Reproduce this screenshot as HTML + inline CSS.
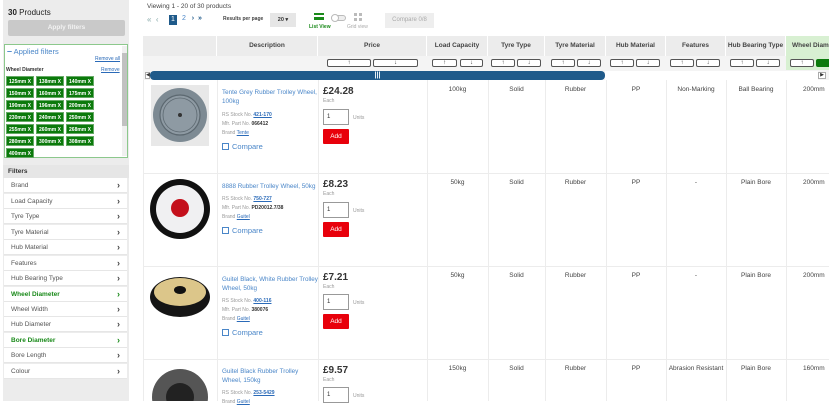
<!DOCTYPE html>
<html><head><meta charset="utf-8"><style>
*{box-sizing:border-box;margin:0;padding:0}
body{width:829px;height:401px;overflow:hidden;background:#fff;font-family:"Liberation Sans",Arial,sans-serif;color:#333;position:relative}
.a{position:absolute}
.side{left:3px;top:0;width:126px;height:401px;background:#ececec}
.tag{position:absolute;height:10px;background:#0b7a0b;color:#fff;font-size:5px;font-weight:bold;line-height:10px;text-align:center;width:28px;border:1px solid #6a6}
.fi{position:absolute;left:4px;width:123px;height:15px;background:#fff;border-bottom:1px solid #e6e6e6;font-size:6.5px;line-height:15px;padding-left:7px;color:#555}
.fi:after{content:"›";position:absolute;right:7px;font-size:9px;font-weight:bold;color:#444}
.fi.g{color:#1a8a1a;font-weight:bold}
.fi.g:after{color:#1a8a1a}
.hd{position:absolute;top:36px;height:20px;background:#ececec;font-size:6.5px;font-weight:bold;line-height:20px;text-align:center;color:#444;border-right:1px solid #fff}
.sr{position:absolute;top:56px;height:14px;background:#f4f4f4}
.sb{position:absolute;top:59px;width:27px;height:8px;border:1px solid #555;border-radius:2px;background:#fff;font-size:6px;line-height:6px;text-align:center;font-weight:bold}
.vl{position:absolute;top:80px;height:321px;width:1px;background:#ececec}
.hl{position:absolute;left:143px;width:686px;height:1px;background:#ececec}
.c{position:absolute;font-size:6.5px;text-align:center;color:#444}
.ds{position:absolute;left:222px;width:96px;font-size:6.3px;color:#4a86c8;line-height:9px}
.m{font-size:5px;color:#999;line-height:9px}
.m b{color:#333}.m u{color:#2a6ab8;font-weight:bold}
.cmp{font-size:7.5px;color:#4a86c8;margin-top:4px}
.cmp i{display:inline-block;width:7px;height:7px;border:1px solid #4a86c8;margin-right:3px;vertical-align:-1px}
.pr{position:absolute;left:323px;font-size:10px;font-weight:bold;color:#333}
.pr span{display:block;font-size:5px;font-weight:normal;color:#999;margin-top:1px}
.in{position:absolute;left:323px;width:26px;height:16px;border:1px solid #999;font-size:6px;line-height:14px;padding-left:3px}
.un{position:absolute;left:353px;font-size:5px;color:#999}
.add{position:absolute;left:323px;width:26px;height:15px;background:#e8000b;color:#fff;font-size:6.5px;line-height:15px;text-align:center;border-radius:1px}
</style></head><body>
<div class="a side"></div>
<div class="a" style="left:8px;top:8px;font-size:8px;color:#222"><b>30</b> Products</div>
<div class="a" style="left:8px;top:20px;width:117px;height:16px;background:#c9c9c9;border-radius:2px;color:#f2f2f2;font-size:6.5px;font-weight:bold;text-align:center;line-height:16px">Apply filters</div>
<div class="a" style="left:4px;top:44px;width:124px;height:114px;background:#fff;border:1px solid #8cc88c"></div>
<div class="a" style="left:122px;top:46px;width:5px;height:110px;background:#f0f0f0"></div>
<div class="a" style="left:122px;top:53px;width:5px;height:73px;background:#c1c1c1"></div>
<div class="a" style="left:7px;top:46px;font-size:7.5px;color:#4a86c8"><b style="font-size:9px">–</b> Applied filters</div>
<div class="a" style="left:95px;top:56px;font-size:5px;color:#2a6ab8;text-decoration:underline">Remove all</div>
<div class="a" style="left:6px;top:67px;font-size:5px;font-weight:bold;color:#333">Wheel Diameter</div>
<div class="a" style="left:101px;top:67px;font-size:5px;color:#2a6ab8;text-decoration:underline">Remove</div>
<div class="tag" style="left:6px;top:76px">125mm X</div><div class="tag" style="left:36px;top:76px">138mm X</div><div class="tag" style="left:66px;top:76px">140mm X</div>
<div class="tag" style="left:6px;top:88px">150mm X</div><div class="tag" style="left:36px;top:88px">160mm X</div><div class="tag" style="left:66px;top:88px">175mm X</div>
<div class="tag" style="left:6px;top:100px">190mm X</div><div class="tag" style="left:36px;top:100px">196mm X</div><div class="tag" style="left:66px;top:100px">200mm X</div>
<div class="tag" style="left:6px;top:112px">230mm X</div><div class="tag" style="left:36px;top:112px">240mm X</div><div class="tag" style="left:66px;top:112px">250mm X</div>
<div class="tag" style="left:6px;top:124px">255mm X</div><div class="tag" style="left:36px;top:124px">260mm X</div><div class="tag" style="left:66px;top:124px">268mm X</div>
<div class="tag" style="left:6px;top:136px">280mm X</div><div class="tag" style="left:36px;top:136px">300mm X</div><div class="tag" style="left:66px;top:136px">308mm X</div>
<div class="tag" style="left:6px;top:148px">400mm X</div>
<div class="a" style="left:3px;top:165px;width:126px;height:13px;background:#e6e6e6;font-size:6.5px;font-weight:bold;line-height:13px;padding-left:5px;color:#333">Filters</div>
<div class="fi" style="top:178px">Brand</div>
<div class="fi" style="top:194px">Load Capacity</div>
<div class="fi" style="top:209px">Tyre Type</div>
<div class="fi" style="top:225px">Tyre Material</div>
<div class="fi" style="top:240px">Hub Material</div>
<div class="fi" style="top:256px">Features</div>
<div class="fi" style="top:271px">Hub Bearing Type</div>
<div class="fi g" style="top:287px">Wheel Diameter</div>
<div class="fi" style="top:302px">Wheel Width</div>
<div class="fi" style="top:317px">Hub Diameter</div>
<div class="fi g" style="top:333px">Bore Diameter</div>
<div class="fi" style="top:348px">Bore Length</div>
<div class="fi" style="top:364px">Colour</div>

<div class="a" style="left:147px;top:3px;font-size:6.5px;color:#444">Viewing 1 - 20 of 30 products</div>
<div class="a" style="left:147px;top:15px;font-size:8px;color:#8aa;letter-spacing:0">«&nbsp;&nbsp;‹</div>
<div class="a" style="left:169px;top:15px;width:8px;height:10px;background:#1f5a8a;color:#fff;font-size:7px;text-align:center;line-height:10px">1</div>
<div class="a" style="left:182px;top:15px;font-size:7px;color:#4a86c8">2&nbsp;&nbsp;&nbsp;<b style="color:#1f5a8a">›&nbsp;&nbsp;»</b></div>
<div class="a" style="left:223px;top:16px;font-size:5px;font-weight:bold;color:#444">Results per page</div>
<div class="a" style="left:270px;top:13px;width:26px;height:14px;background:#e6e6e6;font-size:5.5px;line-height:14px;text-align:center;font-weight:bold">20 ▾</div>
<div class="a" style="left:314px;top:13px;width:10px;height:7px;border-top:2px solid #1a8a1a;border-bottom:2px solid #1a8a1a"><div style="margin-top:1.5px;height:1.5px;background:#1a8a1a"></div></div>
<div class="a" style="left:309px;top:24px;font-size:5px;color:#1a8a1a;font-weight:bold">List View</div>
<div class="a" style="left:331px;top:15px;width:15px;height:6px;border:1px solid #bbb;border-radius:4px;background:#eee"></div>
<div class="a" style="left:331px;top:14px;width:8px;height:8px;border-radius:4px;background:#fff;border:1px solid #bbb"></div>
<div class="a" style="left:354px;top:13px;width:8px;height:8px;border:3px dotted #bbb"></div>
<div class="a" style="left:347px;top:24px;font-size:5px;color:#aaa">Grid view</div>
<div class="a" style="left:385px;top:13px;width:49px;height:15px;background:#eee;font-size:6px;color:#aaa;line-height:15px;text-align:center">Compare 0/8</div>

<div class="hd" style="left:143px;width:74px"></div>
<div class="hd" style="left:217px;width:101px">Description</div>
<div class="hd" style="left:318px;width:109px">Price</div>
<div class="hd" style="left:427px;width:61px">Load Capacity</div>
<div class="hd" style="left:488px;width:57px">Tyre Type</div>
<div class="hd" style="left:545px;width:61px">Tyre Material</div>
<div class="hd" style="left:606px;width:60px">Hub Material</div>
<div class="hd" style="left:666px;width:60px">Features</div>
<div class="hd" style="left:726px;width:60px">Hub Bearing Type</div>
<div class="hd" style="left:786px;width:50px;background:#d8f0d2;text-align:left;padding-left:6px">Wheel Diam</div>
<div class="sr" style="left:143px;width:643px"></div>
<div class="sr" style="left:786px;width:43px;background:#d8f0d2"></div>
<div class="sb" style="left:327px;width:44px">↑</div><div class="sb" style="left:373px;width:45px">↓</div>
<div class="sb" style="left:432px;width:25px">↑</div><div class="sb" style="left:460px;width:23px">↓</div>
<div class="sb" style="left:491px;width:24px">↑</div><div class="sb" style="left:517px;width:24px">↓</div>
<div class="sb" style="left:551px;width:24px">↑</div><div class="sb" style="left:577px;width:24px">↓</div>
<div class="sb" style="left:610px;width:24px">↑</div><div class="sb" style="left:636px;width:24px">↓</div>
<div class="sb" style="left:670px;width:24px">↑</div><div class="sb" style="left:696px;width:24px">↓</div>
<div class="sb" style="left:730px;width:24px">↑</div><div class="sb" style="left:756px;width:24px">↓</div>
<div class="sb" style="left:790px;width:24px">↑</div><div class="sb" style="left:816px;width:20px;background:#0b7a0b;border-color:#0b7a0b"></div>
<div class="a" style="left:143px;top:70px;width:686px;height:10px;background:#f4f4f4"></div>
<div class="a" style="left:145px;top:72px;width:5px;height:7px;background:#fff;border:1px solid #aaa;font-size:5px;line-height:5px">◀</div>
<div class="a" style="left:150px;top:71px;width:455px;height:9px;background:#1f5a8a;border-radius:4px;color:#fff;font-size:7px;line-height:9px;text-align:center;font-weight:bold">|||</div>
<div class="a" style="left:605px;top:71px;width:213px;height:9px;background:#fff"></div>
<div class="a" style="left:818px;top:72px;width:8px;height:7px;background:#fff;border:1px solid #aaa;font-size:5px;line-height:5px;text-align:center">▶</div>

<div class="vl" style="left:143px"></div><div class="vl" style="left:217px"></div><div class="vl" style="left:318px"></div><div class="vl" style="left:427px"></div><div class="vl" style="left:488px"></div><div class="vl" style="left:545px"></div><div class="vl" style="left:606px"></div><div class="vl" style="left:666px"></div><div class="vl" style="left:726px"></div><div class="vl" style="left:786px"></div>
<div class="hl" style="top:173px"></div><div class="hl" style="top:266px"></div><div class="hl" style="top:359px"></div>

<!-- row 1 -->
<div class="a" style="left:151px;top:85px;width:58px;height:61px;background:#e8e8e8"></div>
<svg class="a" style="left:151px;top:85px" width="58" height="61"><circle cx="29" cy="30" r="27" fill="#7d8a93"/><circle cx="29" cy="30" r="20" fill="#8e9aa3" stroke="#5c6870" stroke-width="1.2"/><circle cx="29" cy="30" r="17" fill="none" stroke="#5c6870" stroke-width="0.8"/><circle cx="29" cy="30" r="2" fill="#333"/></svg>
<div class="ds" style="top:88px">Tente Grey Rubber Trolley Wheel, 100kg<div class="m" style="margin-top:5px">RS Stock No. <u>421-170</u><br>Mfr. Part No. <b>066412</b><br>Brand <u style="font-weight:normal">Tente</u></div><div class="cmp"><i></i>Compare</div></div>
<div class="pr" style="top:86px">£24.28<span>Each</span></div>
<div class="in" style="top:109px">1</div><div class="un" style="top:115px">Units</div>
<div class="add" style="top:129px">Add</div>
<div class="c" style="left:427px;width:61px;top:86px">100kg</div><div class="c" style="left:488px;width:57px;top:86px">Solid</div><div class="c" style="left:545px;width:61px;top:86px">Rubber</div><div class="c" style="left:606px;width:60px;top:86px">PP</div><div class="c" style="left:666px;width:60px;top:86px">Non-Marking</div><div class="c" style="left:726px;width:60px;top:86px">Ball Bearing</div><div class="c" style="left:803px;top:86px">200mm</div>

<!-- row 2 -->
<svg class="a" style="left:148px;top:177px" width="64" height="64"><circle cx="32" cy="32" r="30" fill="#111"/><circle cx="32" cy="32" r="24" fill="#f0f0f2"/><circle cx="32" cy="31" r="9" fill="#c4101c"/></svg>
<div class="ds" style="top:182px">8888 Rubber Trolley Wheel, 50kg<div class="m" style="margin-top:4px">RS Stock No. <u>750-727</u><br>Mfr. Part No. <b>PD20012.7/38</b><br>Brand <u style="font-weight:normal">Guitel</u></div><div class="cmp"><i></i>Compare</div></div>
<div class="pr" style="top:179px">£8.23<span>Each</span></div>
<div class="in" style="top:202px">1</div><div class="un" style="top:208px">Units</div>
<div class="add" style="top:222px">Add</div>
<div class="c" style="left:427px;width:61px;top:179px">50kg</div><div class="c" style="left:488px;width:57px;top:179px">Solid</div><div class="c" style="left:545px;width:61px;top:179px">Rubber</div><div class="c" style="left:606px;width:60px;top:179px">PP</div><div class="c" style="left:666px;width:60px;top:179px">-</div><div class="c" style="left:726px;width:60px;top:179px">Plain Bore</div><div class="c" style="left:803px;top:179px">200mm</div>

<!-- row 3 -->
<svg class="a" style="left:148px;top:270px" width="64" height="50"><ellipse cx="32" cy="27" rx="30" ry="20" fill="#151515"/><ellipse cx="32" cy="22" rx="26" ry="14" fill="#dcc68a"/><ellipse cx="32" cy="20" rx="6" ry="4" fill="#111"/></svg>
<div class="ds" style="top:275px">Guitel Black, White Rubber Trolley Wheel, 50kg<div class="m" style="margin-top:4px">RS Stock No. <u>400-116</u><br>Mfr. Part No. <b>380076</b><br>Brand <u style="font-weight:normal">Guitel</u></div><div class="cmp"><i></i>Compare</div></div>
<div class="pr" style="top:272px">£7.21<span>Each</span></div>
<div class="in" style="top:294px">1</div><div class="un" style="top:300px">Units</div>
<div class="add" style="top:314px">Add</div>
<div class="c" style="left:427px;width:61px;top:272px">50kg</div><div class="c" style="left:488px;width:57px;top:272px">Solid</div><div class="c" style="left:545px;width:61px;top:272px">Rubber</div><div class="c" style="left:606px;width:60px;top:272px">PP</div><div class="c" style="left:666px;width:60px;top:272px">-</div><div class="c" style="left:726px;width:60px;top:272px">Plain Bore</div><div class="c" style="left:803px;top:272px">200mm</div>

<!-- row 4 -->
<svg class="a" style="left:150px;top:364px" width="60" height="37"><circle cx="30" cy="33" r="28" fill="#555"/><circle cx="30" cy="33" r="14" fill="#222"/></svg>
<div class="ds" style="top:367px">Guitel Black Rubber Trolley Wheel, 150kg<div class="m" style="margin-top:4px">RS Stock No. <u>253-5429</u><br>Brand <u style="font-weight:normal">Guitel</u></div></div>
<div class="pr" style="top:365px">£9.57<span>Each</span></div>
<div class="in" style="top:387px">1</div><div class="un" style="top:393px">Units</div>
<div class="c" style="left:427px;width:61px;top:365px">150kg</div><div class="c" style="left:488px;width:57px;top:365px">Solid</div><div class="c" style="left:545px;width:61px;top:365px">Rubber</div><div class="c" style="left:606px;width:60px;top:365px">PP</div><div class="c" style="left:666px;width:60px;top:365px">Abrasion Resistant</div><div class="c" style="left:726px;width:60px;top:365px">Plain Bore</div><div class="c" style="left:803px;top:365px">160mm</div>
</body></html>
